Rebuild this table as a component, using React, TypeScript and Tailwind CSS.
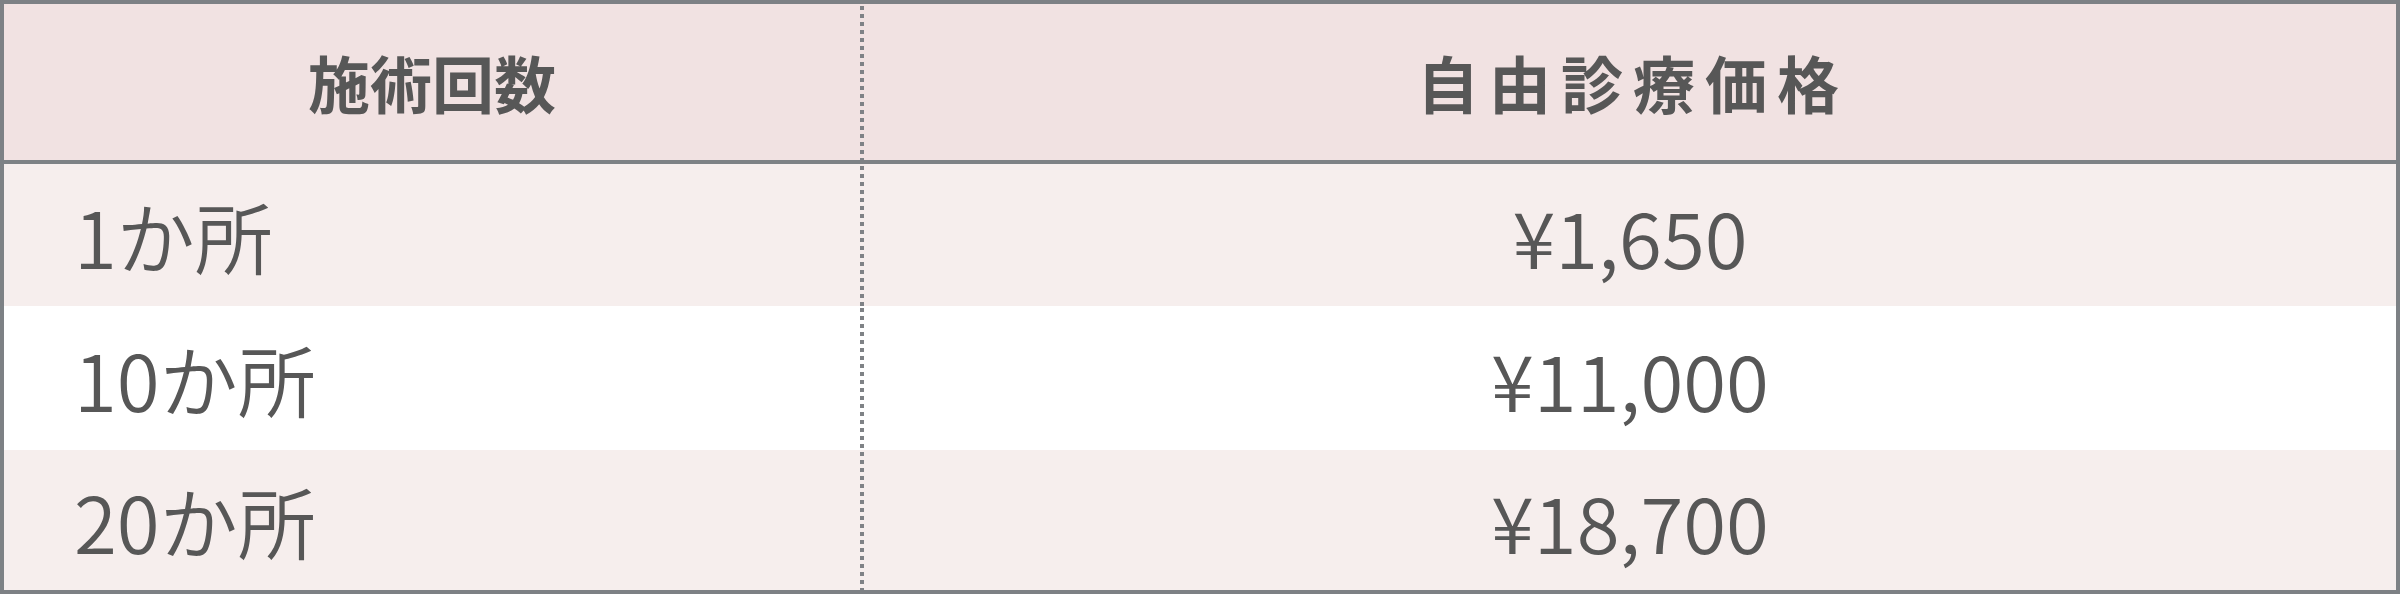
import React from "react";

const rows = [
  { count: "1か所", price: "¥1,650", bg: "bg-[#f6eeed]", h: "h-[142px]" },
  { count: "10か所", price: "¥11,000", bg: "bg-white", h: "h-[144px]" },
  { count: "20か所", price: "¥18,700", bg: "bg-[#f6eeed]", h: "h-[140px]" },
];

const font = { fontFamily: '"Noto Sans CJK JP", "Noto Sans", sans-serif' };

const Divider = () => (
  <div className="w-[4px] self-stretch shrink-0 bg-[repeating-linear-gradient(to_bottom,transparent_0px,transparent_2px,#7f8286_2px,#7f8286_6px,transparent_6px,transparent_8px)]" />
);

export default function App() {
  return (
    <div className="w-[2400px] h-[594px] bg-white" style={font}>
      <div className="w-full h-full border-4 border-[#7d8185] flex flex-col text-[#575757]">
        {/* Header */}
        <div className="flex h-[160px] shrink-0 bg-[#f1e2e2] border-b-4 border-[#7d8185]">
          <div className="w-[856px] flex items-center justify-center text-[62px] font-bold leading-none">施術回数</div>
          <Divider />
          <div className="flex-1 flex items-center justify-center text-[62px] font-bold leading-none tracking-[10px] pl-[6px]">自由診療価格</div>
        </div>

        {/* Rows */}
        {rows.map((r) => (
          <div key={r.count} className={`flex ${r.h} ${r.bg}`}>
            <div className="w-[856px] flex items-center pl-[70px] text-[78px] font-[350] leading-none">{r.count}</div>
            <Divider />
            <div className="flex-1 flex items-center justify-center text-[78px] font-[350] leading-none">{r.price}</div>
          </div>
        ))}
      </div>
    </div>
  );
}
